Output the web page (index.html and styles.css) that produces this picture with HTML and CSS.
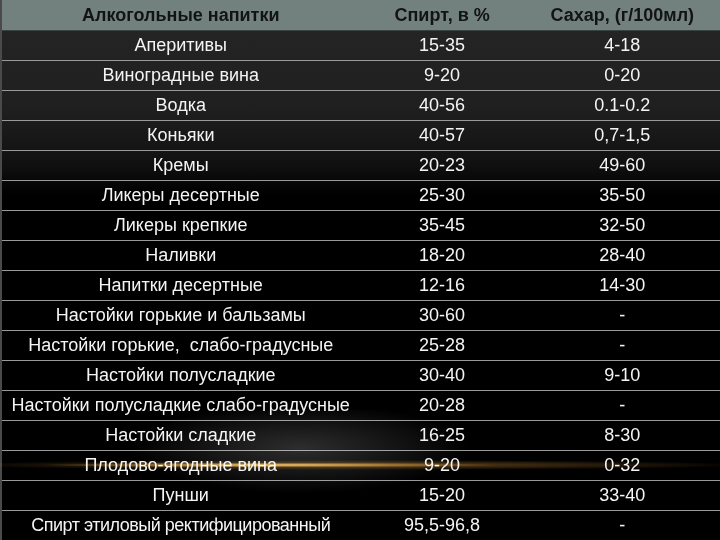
FILE: index.html
```html
<!DOCTYPE html>
<html lang="ru">
<head>
<meta charset="utf-8">
<link rel="stylesheet" href="styles.css">
</head>
<body>
<div class="page">
<table class="drinks">
<colgroup><col class="c1"><col class="c2"><col class="c3"></colgroup>
<thead>
<tr><th>Алкогольные напитки</th><th>Спирт, в %</th><th>Сахар, (г/100мл)</th></tr>
</thead>
<tbody>
<tr><td>Аперитивы</td><td>15-35</td><td>4-18</td></tr>
<tr><td>Виноградные вина</td><td>9-20</td><td>0-20</td></tr>
<tr><td>Водка</td><td>40-56</td><td>0.1-0.2</td></tr>
<tr><td>Коньяки</td><td>40-57</td><td>0,7-1,5</td></tr>
<tr><td>Кремы</td><td>20-23</td><td>49-60</td></tr>
<tr><td>Ликеры десертные</td><td>25-30</td><td>35-50</td></tr>
<tr><td>Ликеры крепкие</td><td>35-45</td><td>32-50</td></tr>
<tr><td>Наливки</td><td>18-20</td><td>28-40</td></tr>
<tr><td>Напитки десертные</td><td>12-16</td><td>14-30</td></tr>
<tr><td>Настойки горькие и бальзамы</td><td>30-60</td><td>-</td></tr>
<tr><td>Настойки горькие,&nbsp; слабо-градусные</td><td>25-28</td><td>-</td></tr>
<tr><td>Настойки полусладкие</td><td>30-40</td><td>9-10</td></tr>
<tr><td>Настойки полусладкие слабо-градусные</td><td>20-28</td><td>-</td></tr>
<tr><td>Настойки сладкие</td><td>16-25</td><td>8-30</td></tr>
<tr><td>Плодово-ягодные вина</td><td>9-20</td><td>0-32</td></tr>
<tr><td>Пунши</td><td>15-20</td><td>33-40</td></tr>
<tr><td class="tight">Спирт этиловый ректифицированный</td><td>95,5-96,8</td><td>-</td></tr>
</tbody>
</table>
<div class="glow"></div>
</div>
</body>
</html>
```
FILE: styles.css
```css
html, body {
  margin: 0;
  padding: 0;
  background: #000;
}
.page {
  position: relative;
  width: 720px;
  height: 540px;
  overflow: hidden;
  background: linear-gradient(to bottom, #262626 0px, #1f1f1f 110px, #101010 165px, #000 195px, #000 540px);
  font-family: "Liberation Sans", Arial, sans-serif;
}
.drinks {
  width: 720px;
  border-collapse: collapse;
  table-layout: fixed;
  border-left: 2px solid #4a4a4a;
}
.c1 { width: 358px; }
.c2 { width: 165px; }
.c3 { width: 195px; }
.drinks th {
  height: 30px;
  padding: 0;
  background: #72817d;
  color: #121414;
  font-weight: bold;
  font-size: 18px;
  text-align: center;
  border-bottom: 1px solid #3a4240;
}
.drinks td {
  height: 29px;
  padding: 0;
  color: #f4f4f4;
  font-size: 18px;
  text-align: center;
  border-bottom: 1px solid #9a9a9a;
}
.drinks td.tight {
  letter-spacing: -0.5px;
}
.glow {
  position: absolute;
  left: 0;
  top: 410px;
  width: 720px;
  height: 90px;
  pointer-events: none;
  background:
    radial-gradient(ellipse 230px 2.5px at 270px 55px, rgba(255, 215, 130, 0.95), rgba(220, 160, 60, 0.5) 55%, rgba(0,0,0,0) 100%),
    radial-gradient(ellipse 400px 5px at 350px 55px, rgba(190, 130, 50, 0.55), rgba(0,0,0,0) 100%),
    radial-gradient(ellipse 170px 45px at 300px 38px, rgba(150, 150, 150, 0.3), rgba(0,0,0,0) 100%);
  mix-blend-mode: screen;
}
```
